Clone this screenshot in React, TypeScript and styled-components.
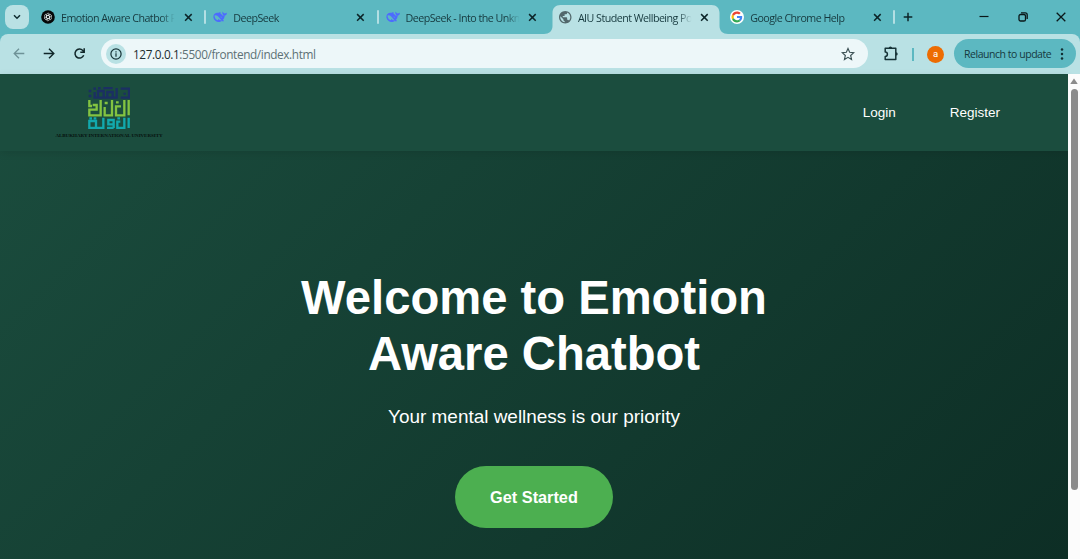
import React from "react";
import styled, { createGlobalStyle } from "styled-components";

const GlobalStyle = createGlobalStyle`
  * { box-sizing: border-box; }
  html, body { margin: 0; padding: 0; overflow: hidden; }
`;

const Window = styled.div`
  width: 1080px;
  height: 559px;
  display: flex;
  flex-direction: column;
  overflow: hidden;
  background: #5cb8c1;
  font-family: "Open Sans", "Noto Sans", sans-serif;
  color: #16393e;
`;

const TabStrip = styled.div`
  height: 34px;
  flex: none;
  display: flex;
  align-items: stretch;
  padding-left: 5px;
`;

const TabSearch = styled.div`
  width: 24px;
  height: 24px;
  margin: 5px 4px 0 0;
  border-radius: 8px;
  background: #b9e1e4;
  display: flex;
  align-items: center;
  justify-content: center;
`;

const Tab = styled.div`
  position: relative;
  width: 172.3px;
  display: flex;
  align-items: center;
  padding-left: 8px;
  isolation: isolate;
`;

const ActiveShape = styled.svg`
  position: absolute;
  left: -6px;
  bottom: 0;
  z-index: -1;
`;

const Favicon = styled.div`
  width: 14px;
  height: 14px;
  flex: none;
  display: flex;
  align-items: center;
  justify-content: center;
  svg { display: block; overflow: visible; }
`;

const TabTitle = styled.div`
  width: 116px;
  margin-left: 6px;
  overflow: hidden;
  white-space: nowrap;
  font-size: 10.7px;
  line-height: 16px;
  padding-top: 1px;
  letter-spacing: -0.53px;
  mask-image: linear-gradient(to right, #000 86%, transparent 98%);
`;

const CloseIcon = styled.svg`
  margin-left: 6.5px;
  flex: none;
`;

const TabDivider = styled.div`
  position: absolute;
  right: -1px;
  top: 10px;
  width: 2px;
  height: 14px;
  border-radius: 1px;
  background: #b3dfe3;
`;

const NewTab = styled.div`
  display: flex;
  align-items: center;
  padding-left: 8.5px;
`;

const WindowControls = styled.div`
  margin-left: auto;
  display: flex;
  align-items: center;
  gap: 28.5px;
  padding-right: 14px;
  svg { display: block; }
`;

const Toolbar = styled.div`
  height: 40px;
  flex: none;
  display: flex;
  align-items: center;
  background: #b9e1e4;
  border-radius: 8px 8px 0 0;
  padding: 0 4px 0 12px;
  svg { display: block; flex: none; }
`;

const NavButtons = styled.div`
  display: flex;
  gap: 16px;
  margin-right: 14px;
`;

const AddressBar = styled.div`
  width: 767px;
  height: 29px;
  margin-top: -1px;
  border-radius: 15px;
  background: #edf7f9;
  display: flex;
  align-items: center;
  padding: 0 13px 0 5px;
`;

const SiteInfo = styled.div`
  width: 20px;
  height: 20px;
  border-radius: 50%;
  background: #b9e1e4;
  display: flex;
  align-items: center;
  justify-content: center;
`;

const Url = styled.div`
  flex: 1;
  margin-left: 7px;
  font-size: 11.8px;
  line-height: 18px;
  letter-spacing: -0.38px;
  color: #5d7175;
  b { font-weight: 400; color: #1c2d30; }
`;

const Extensions = styled.div`
  margin-left: 14px;
  width: 18px;
`;

const ToolDivider = styled.div`
  width: 2px;
  height: 13px;
  margin-left: 12px;
  background: #5cb8c1;
`;

const Avatar = styled.div`
  width: 17px;
  height: 17px;
  margin-left: 13px;
  border-radius: 50%;
  background: #ed6c02;
  color: #fff;
  font: 9.5px/16px Roboto, sans-serif;
  text-align: center;
`;

const Relaunch = styled.div`
  width: 122px;
  height: 29px;
  margin: -1px 0 0 auto;
  border-radius: 15px;
  background: #5cb8c1;
  display: flex;
  align-items: center;
  justify-content: space-between;
  padding: 0 12px 0 10px;
  font-size: 10.5px;
  white-space: nowrap;
  letter-spacing: -0.46px;
`;

const Viewport = styled.div`
  flex: 1;
  min-height: 0;
  display: flex;
`;

const Page = styled.main`
  width: 1068px;
  display: flex;
  flex-direction: column;
  font-family: "Liberation Sans", Arial, sans-serif;
  background: linear-gradient(135deg, #1b4d3e 0%, #0d2e25 100%);
  color: #fff;
`;

const Header = styled.header`
  height: 77px;
  flex: none;
  display: flex;
  align-items: center;
  justify-content: space-between;
  padding: 0 68px 0 54px;
  background: #1b4d3e;
  box-shadow: 0 2px 8px rgba(0, 0, 0, 0.1);
`;

const Brand = styled.div`
  width: 110px;
  height: 54px;
  display: flex;
  flex-direction: column;
  align-items: center;
  margin-top: 3px;
  svg { display: block; }
`;

const BrandName = styled.div`
  margin-top: 4px;
  font: 700 5px/6px "Liberation Serif", serif;
  white-space: nowrap;
  color: #06120e;
  letter-spacing: -0.03px;
`;

const Links = styled.nav`
  display: flex;
  gap: 54px;
  font-size: 13.5px;
  line-height: 16px;
`;

const Hero = styled.section`
  display: flex;
  flex-direction: column;
  align-items: center;
  padding-top: 119px;
`;

const Title = styled.h1`
  width: 520px;
  margin: 0;
  text-align: center;
  font-size: 47.2px;
  line-height: 56px;
  font-weight: 700;
`;

const Subtitle = styled.p`
  margin: 23px 0 0;
  font-size: 18.95px;
  line-height: 23px;
`;

const Cta = styled.button`
  width: 158px;
  height: 62px;
  margin-top: 38.4px;
  border: 0;
  border-radius: 31px;
  background: #4caf50;
  color: #fff;
  font: 700 16.3px "Liberation Sans", Arial, sans-serif;
`;

const Scrollbar = styled.div`
  width: 12px;
  background: #fcfcfc;
  display: flex;
  flex-direction: column;
  align-items: center;
  padding-top: 4px;
`;

const Thumb = styled.div`
  width: 7px;
  height: 401px;
  margin-top: 4px;
  border-radius: 4px;
  background: #8b8b8b;
`;

const ChatGptIcon = () => (
  <svg width="14" height="14" viewBox="0 0 14 14">
    <circle cx="7" cy="7" r="6.8" fill="#050708" />
    <g fill="none" stroke="#dfe8e9" strokeWidth=".7">
      {[0, 60, 120, 180, 240, 300].map((a) => (
        <path key={a} transform={`rotate(${a} 7 7)`} d="M5.5 7.9V4.9a1.700 1.700 0 0 1 3.100-.9M7 5.300l2.300 1.350" />
      ))}
    </g>
  </svg>
);

const WhaleIcon = () => (
  <svg width="14" height="14" viewBox="0 0 24 24">
    <path
      fill="#4d6bfe"
      d="M23.75 4.48c-.25-.12-.36.11-.51.23-.05.04-.09.09-.14.14-.37.4-.8.66-1.37.63-.83-.05-1.53.21-2.16.84-.13-.78-.57-1.25-1.25-1.55-.35-.16-.71-.31-.96-.65-.17-.24-.22-.51-.31-.78-.05-.16-.11-.32-.3-.35-.2-.03-.28.14-.36.28-.31.57-.43 1.2-.42 1.84.03 1.44.63 2.58 1.84 3.39.14.09.17.19.13.33-.08.28-.18.55-.26.83-.06.18-.14.22-.33.14a5.5 5.5 0 0 1-1.74-1.18c-.86-.83-1.63-1.74-2.6-2.45-.99-.96.13-1.75.39-1.84.27-.1.1-.43-.78-.43-.88.01-1.69.3-2.72.69-.15.06-.31.1-.47.14a9.6 9.6 0 0 0-2.92-.1C4.6 4.85 3.13 5.74 2.05 7.22.75 9.01.45 11.03.82 13.15c.39 2.22 1.5 4.06 3.22 5.48 1.78 1.47 3.84 2.19 6.18 2.05 1.42-.08 3-.27 4.79-1.79.45.23.92.31 1.71.38.6.06 1.19-.03 1.64-.12.7-.15.65-.8.4-.92-2.07-.96-1.61-.57-2.02-.89 1.05-1.24 2.63-2.54 3.25-6.71.05-.33.01-.54 0-.81 0-.16.03-.23.22-.25a3.9 3.9 0 0 0 1.45-.44c1.31-.72 1.84-1.89 1.97-3.31.02-.22 0-.44-.24-.56ZM12.11 17.35c-2-1.57-2.97-2.09-3.37-2.07-.37.02-.31.45-.22.73.08.27.19.46.35.7.11.16.18.4-.11.58-.64.4-1.74-.13-1.8-.16-1.28-.75-2.36-1.75-3.11-3.12a9.5 9.5 0 0 1-1.22-4.22c-.02-.36.09-.49.45-.56a4.5 4.5 0 0 1 1.45-.04c2.01.3 3.73 1.2 5.16 2.62.82.81 1.44 1.78 2.08 2.73.68 1.01 1.41 1.97 2.34 2.76.33.27.59.48.84.63-.75.09-2.01.11-2.84-.58Zm.92-5.88c0-.16.13-.29.29-.29.83.1 1.38.5 1.59 1.07.18.49.1.99-.29.92-.65-.15-1.59-.88-1.59-1.7Z"
    />
  </svg>
);

const GlobeIcon = () => (
  <svg width="12.5" height="12.5" viewBox="2 2 20 20">
    <path
      fill="#52676b"
      d="M12 2C6.48 2 2 6.48 2 12s4.48 10 10 10 10-4.48 10-10S17.52 2 12 2zm-1 17.93c-3.95-.49-7-3.85-7-7.93 0-.62.08-1.21.21-1.79L9 15v1c0 1.1.9 2 2 2v1.93zm6.9-2.54c-.26-.81-1-1.39-1.9-1.39h-1v-3c0-.55-.45-1-1-1H8v-2h2c.55 0 1-.45 1-1V7h2c1.1 0 2-.9 2-2v-.41c2.93 1.19 5 4.06 5 7.41 0 2.08-.8 3.97-2.1 5.39z"
    />
  </svg>
);

const GoogleIcon = () => (
  <svg width="14" height="14" viewBox="0 0 24 24">
    <circle cx="12" cy="12" r="12" fill="#fff" />
    <g transform="translate(2.6 2.6) scale(.39)">
      <path fill="#EA4335" d="M24 9.5c3.54 0 6.71 1.22 9.21 3.6l6.85-6.85C35.9 2.38 30.47 0 24 0 14.62 0 6.51 5.38 2.56 13.22l7.98 6.19C12.43 13.72 17.74 9.5 24 9.5z" />
      <path fill="#4285F4" d="M46.98 24.55c0-1.57-.15-3.09-.38-4.55H24v9.02h12.94c-.58 2.96-2.26 5.48-4.78 7.18l7.73 6c4.51-4.18 7.09-10.36 7.09-17.65z" />
      <path fill="#FBBC05" d="M10.53 28.59A14.5 14.5 0 0 1 9.77 24c0-1.6.27-3.14.76-4.59l-7.98-6.19A24 24 0 0 0 0 24c0 3.88.92 7.54 2.56 10.78l7.97-6.19z" />
      <path fill="#34A853" d="M24 48c6.48 0 11.93-2.13 15.89-5.81l-7.73-6c-2.15 1.45-4.92 2.3-8.16 2.3-6.26 0-11.57-4.22-13.47-9.91l-7.98 6.19C6.51 42.62 14.62 48 24 48z" />
    </g>
  </svg>
);

const UniversityMark = () => (
  <svg width="42" height="42" viewBox="0 0 126 126" fill="none" strokeWidth="7">
    <g stroke="#1b2f63">
      <path d="M98 5h25v27H98M110 17v6M86 3v29H58V15h16v17M16 32h44M47 32V12H30v20M20 32V15M2 12h8M2 27h8M16 5h8M30 3h8M46 3h28" />
    </g>
    <g stroke="#83c341">
      <path d="M122 39v46M109 39v46H84V58h15M72 39v46H50V60M38 39v46H4V68h22V54H14M4 39v18h8M84 46h8M50 48h9" />
    </g>
    <g stroke="#12a9ad">
      <path d="M122 92v31M109 92v31H88v-19h9M77 123h-20M77 123v-24H61v13h16M46 92v31H4v-21h20v21M4 94h8M17 94h8M88 94h8" />
    </g>
  </svg>
);

const Close = () => (
  <CloseIcon width="9" height="9" viewBox="0 0 9 9">
    <path d="M1.1 1.1l6.6 6.6M7.7 1.1L1.1 7.7" stroke="#0c2529" strokeWidth="1.5" />
  </CloseIcon>
);

type TabInfo = {
  title: string;
  icon: React.ReactNode;
  active?: boolean;
  divider?: boolean;
};

const tabs: TabInfo[] = [
  { title: "Emotion Aware Chatbot P", icon: <ChatGptIcon />, divider: true },
  { title: "DeepSeek", icon: <WhaleIcon />, divider: true },
  { title: "DeepSeek - Into the Unkn", icon: <WhaleIcon /> },
  { title: "AIU Student Wellbeing Po", icon: <GlobeIcon />, active: true },
  { title: "Google Chrome Help", icon: <GoogleIcon />, divider: true },
];

export default function App() {
  return (
    <Window>
      <GlobalStyle />
      <TabStrip>
        <TabSearch>
          <svg width="8" height="6" viewBox="0 0 8 6">
            <path d="M1 1.2l3 3 3-3" fill="none" stroke="#102c30" strokeWidth="1.5" />
          </svg>
        </TabSearch>
        {tabs.map((tab) => (
          <Tab key={tab.title}>
            {tab.active && (
              <ActiveShape width="184" height="29" viewBox="0 0 184 29">
                <path d="M0 29c5 0 8.500-3 8.500-8V8c0-5 3-8 8-8h151c5 0 8 3 8 8v13c0 5 3.500 8 8.500 8z" fill="#b9e1e4" />
              </ActiveShape>
            )}
            <Favicon>{tab.icon}</Favicon>
            <TabTitle>{tab.title}</TabTitle>
            <Close />
            {tab.divider && <TabDivider />}
          </Tab>
        ))}
        <NewTab>
          <svg width="10" height="10" viewBox="0 0 10 10">
            <path d="M5 .7v8.600M.7 5h8.600" stroke="#0c2529" strokeWidth="1.500" />
          </svg>
        </NewTab>
        <WindowControls>
          <svg width="10" height="10" viewBox="0 0 10 10">
            <path d="M.5 4.500h9" stroke="#0a1719" strokeWidth="1.200" />
          </svg>
          <svg width="10" height="10" viewBox="0 0 10 10" fill="none" stroke="#0a1719" strokeWidth="1.300">
            <rect x="1" y="2.500" width="6.500" height="6.500" rx="1.600" />
            <path d="M3 .9h4.200A2 2 0 0 1 9.200 2.900V7" />
          </svg>
          <svg width="10" height="10" viewBox="0 0 10 10">
            <path d="M.7.7l8.600 8.600M9.300.7L.7 9.300" stroke="#0a1719" strokeWidth="1.300" />
          </svg>
        </WindowControls>
      </TabStrip>

      <Toolbar>
        <NavButtons>
          <svg width="14" height="14" viewBox="0 0 14 14" fill="none" stroke="#6e9297" strokeWidth="1.300">
            <path d="M12.300 6.500H2.300M7 1.700L2.200 6.500 7 11.300" />
          </svg>
          <svg width="14" height="14" viewBox="0 0 14 14" fill="none" stroke="#102629" strokeWidth="1.400">
            <path d="M1.700 6.500h10M7 1.700l4.800 4.800L7 11.300" />
          </svg>
          <svg width="15" height="14" viewBox="0 0 15 14" fill="none" stroke="#102629" strokeWidth="1.500">
            <path d="M11.700 8.300A4.500 4.500 0 1 1 10.800 3.500L12 4.700M12.200 1.300v3.900H8.300" />
          </svg>
        </NavButtons>
        <AddressBar>
          <SiteInfo>
            <svg width="12" height="12" viewBox="0 0 12 12" fill="none" stroke="#163337" strokeWidth="1.200">
              <circle cx="6" cy="6" r="5.100" />
              <path d="M6 5.300v3.400M6 3.200v1.300" />
            </svg>
          </SiteInfo>
          <Url><b>127.0.0.1</b>:5500/frontend/index.html</Url>
          <svg width="14" height="14" viewBox="0 0 14 14" fill="none" stroke="#3b5054" strokeWidth="1.150">
            <path d="M7 1.500l1.650 3.800 4.100.4-3.100 2.750.9 4.050L7 10.350 3.450 12.500l.9-4.050-3.100-2.750 4.100-.4z" />
          </svg>
        </AddressBar>
        <Extensions>
          <svg width="18" height="18" viewBox="0 0 18 18">
            <path d="M3.200 3.300h10.600V14.400H3.200V11.400a2 2 0 0 0 0-4.400z" fill="none" stroke="#163337" strokeWidth="1.500" strokeLinejoin="round" />
            <path d="M6.700 3.200a1.700 1.700 0 0 1 3.400 0zM14 7.200a1.700 1.700 0 0 1 0 3.400z" fill="#163337" />
          </svg>
        </Extensions>
        <ToolDivider />
        <Avatar>a</Avatar>
        <Relaunch>
          Relaunch to update
          <svg width="4" height="14" viewBox="0 0 4 14" fill="#123034">
            <circle cx="2" cy="2.500" r="1.250" />
            <circle cx="2" cy="7" r="1.250" />
            <circle cx="2" cy="11.500" r="1.250" />
          </svg>
        </Relaunch>
      </Toolbar>

      <Viewport>
        <Page>
          <Header>
            <Brand>
              <UniversityMark />
              <BrandName>ALBUKHARY INTERNATIONAL UNIVERSITY</BrandName>
            </Brand>
            <Links>
              <span>Login</span>
              <span>Register</span>
            </Links>
          </Header>
          <Hero>
            <Title>Welcome to Emotion Aware Chatbot</Title>
            <Subtitle>Your mental wellness is our priority</Subtitle>
            <Cta>Get Started</Cta>
          </Hero>
        </Page>
        <Scrollbar>
          <svg width="8" height="7" viewBox="0 0 8 7">
            <path d="M4 .5L7.500 5.500Q7.600 6 7 6H1Q.4 6 .5 5.500z" fill="#8b8b8b" />
          </svg>
          <Thumb />
        </Scrollbar>
      </Viewport>
    </Window>
  );
}
